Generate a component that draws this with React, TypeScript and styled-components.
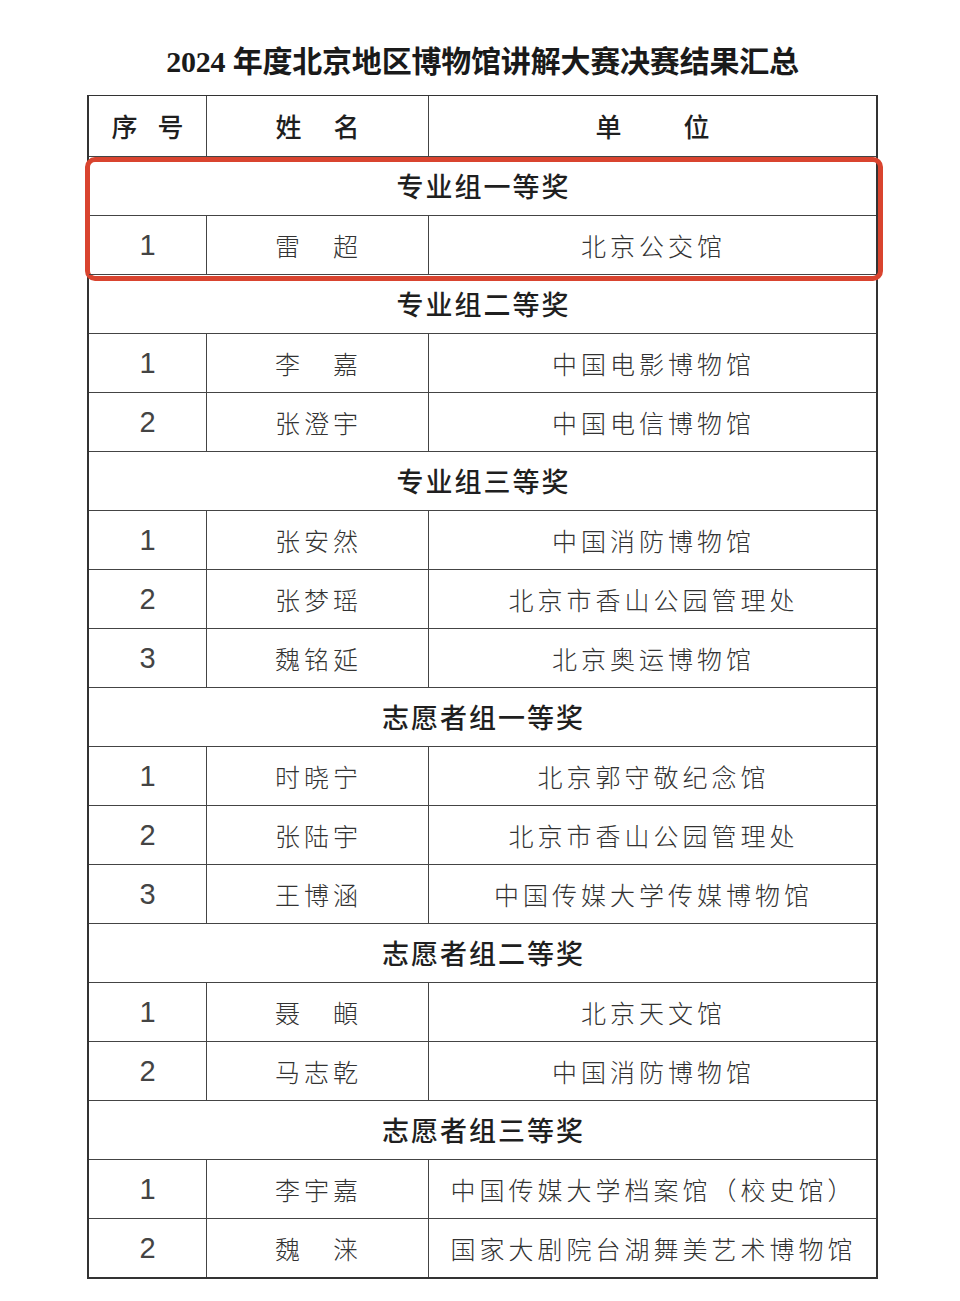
import React from "react";
import styled, { createGlobalStyle } from "styled-components";

const GlobalStyle = createGlobalStyle`
  *, *::before, *::after {
    box-sizing: border-box;
  }
  html, body {
    margin: 0;
    padding: 0;
    background: #fff;
  }
  body {
    font-family: "Noto Sans CJK SC", "Noto Sans", sans-serif;
    color: #2b2b2b;
  }
`;

const Page = styled.div`
  width: 960px;
  height: 1301px;
  padding-left: 87px;
  display: flex;
  flex-direction: column;
  background: #fff;
`;

const Title = styled.h1`
  margin: 44px 0 0;
  width: 791px;
  height: 36px;
  text-align: center;
  font-family: "Liberation Serif", "Noto Sans CJK SC", serif;
  font-size: 30px;
  font-weight: 700;
  line-height: 36px;
  color: #1a1a1a;
  letter-spacing: -0.2px;
`;

const Table = styled.div`
  margin-top: 15px;
  width: 791px;
  border: 2px solid #333;
  border-top-width: 1.5px;
  display: flex;
  flex-direction: column;
`;

const Row = styled.div<{ $head?: boolean }>`
  display: grid;
  grid-template-columns: 118px 222px 1fr;
  height: ${(p) => (p.$head ? 59.5 : 59)}px;
  border-top: ${(p) => (p.$head ? "none" : "1.5px solid #444")};
`;

const Cell = styled.div<{ $last?: boolean }>`
  display: flex;
  align-items: center;
  justify-content: center;
  border-right: ${(p) => (p.$last ? "none" : "1.5px solid #444")};
  font-size: 25px;
  letter-spacing: 4px;
  color: #333;
  font-weight: 300;
  white-space: pre;
  padding-left: 2px;
`;

const HeadCell = styled(Cell)<{ $spacing: number }>`
  font-size: 26px;
  font-weight: 500;
  color: #1f1f1f;
  letter-spacing: ${(p) => p.$spacing}px;
  padding-left: ${(p) => p.$spacing}px;
`;

const NumCell = styled(Cell)`
  font-family: "Liberation Sans", Arial, sans-serif;
  font-size: 29px;
  letter-spacing: 0;
  font-weight: 400;
  color: #444;
  padding-left: 0;
  padding-top: 2px;
`;

const Group = styled.div<{ $highlight?: boolean }>`
  position: relative;
  border-top: 1.5px solid #444;
  &::after {
    content: "";
    display: ${(p) => (p.$highlight ? "block" : "none")};
    position: absolute;
    left: -4px;
    right: -7px;
    top: 0px;
    bottom: -7px;
    border: 5px solid #d9442f;
    border-radius: 10px;
    pointer-events: none;
  }
`;

const GroupTitle = styled.div`
  height: 58px;
  display: flex;
  align-items: center;
  justify-content: center;
  font-size: 27px;
  font-weight: 500;
  color: #1f1f1f;
  letter-spacing: 2px;
  padding-left: 2px;
`;

type Entry = { no: string; name: string; unit: string };
type Section = { title: string; entries: Entry[]; highlight?: boolean };

const sections: Section[] = [
  {
    title: "专业组一等奖",
    highlight: true,
    entries: [{ no: "1", name: "雷　超", unit: "北京公交馆" }],
  },
  {
    title: "专业组二等奖",
    entries: [
      { no: "1", name: "李　嘉", unit: "中国电影博物馆" },
      { no: "2", name: "张澄宇", unit: "中国电信博物馆" },
    ],
  },
  {
    title: "专业组三等奖",
    entries: [
      { no: "1", name: "张安然", unit: "中国消防博物馆" },
      { no: "2", name: "张梦瑶", unit: "北京市香山公园管理处" },
      { no: "3", name: "魏铭延", unit: "北京奥运博物馆" },
    ],
  },
  {
    title: "志愿者组一等奖",
    entries: [
      { no: "1", name: "时晓宁", unit: "北京郭守敬纪念馆" },
      { no: "2", name: "张陆宇", unit: "北京市香山公园管理处" },
      { no: "3", name: "王博涵", unit: "中国传媒大学传媒博物馆" },
    ],
  },
  {
    title: "志愿者组二等奖",
    entries: [
      { no: "1", name: "聂　頔", unit: "北京天文馆" },
      { no: "2", name: "马志乾", unit: "中国消防博物馆" },
    ],
  },
  {
    title: "志愿者组三等奖",
    entries: [
      { no: "1", name: "李宇嘉", unit: "中国传媒大学档案馆（校史馆）" },
      { no: "2", name: "魏　涞", unit: "国家大剧院台湖舞美艺术博物馆" },
    ],
  },
];

const App = () => {
  return (
    <Page>
      <GlobalStyle />
      <Title>2024 年度北京地区博物馆讲解大赛决赛结果汇总</Title>
      <Table>
        <Row $head>
          <HeadCell $spacing={20}>序号</HeadCell>
          <HeadCell $spacing={32}>姓名</HeadCell>
          <HeadCell $spacing={62} $last>
            单位
          </HeadCell>
        </Row>
        {sections.map((s) => (
          <Group key={s.title} $highlight={s.highlight}>
            <GroupTitle>{s.title}</GroupTitle>
            {s.entries.map((e) => (
              <Row key={e.no}>
                <NumCell>{e.no}</NumCell>
                <Cell>{e.name}</Cell>
                <Cell $last>{e.unit}</Cell>
              </Row>
            ))}
          </Group>
        ))}
      </Table>
    </Page>
  );
};

export default App;
